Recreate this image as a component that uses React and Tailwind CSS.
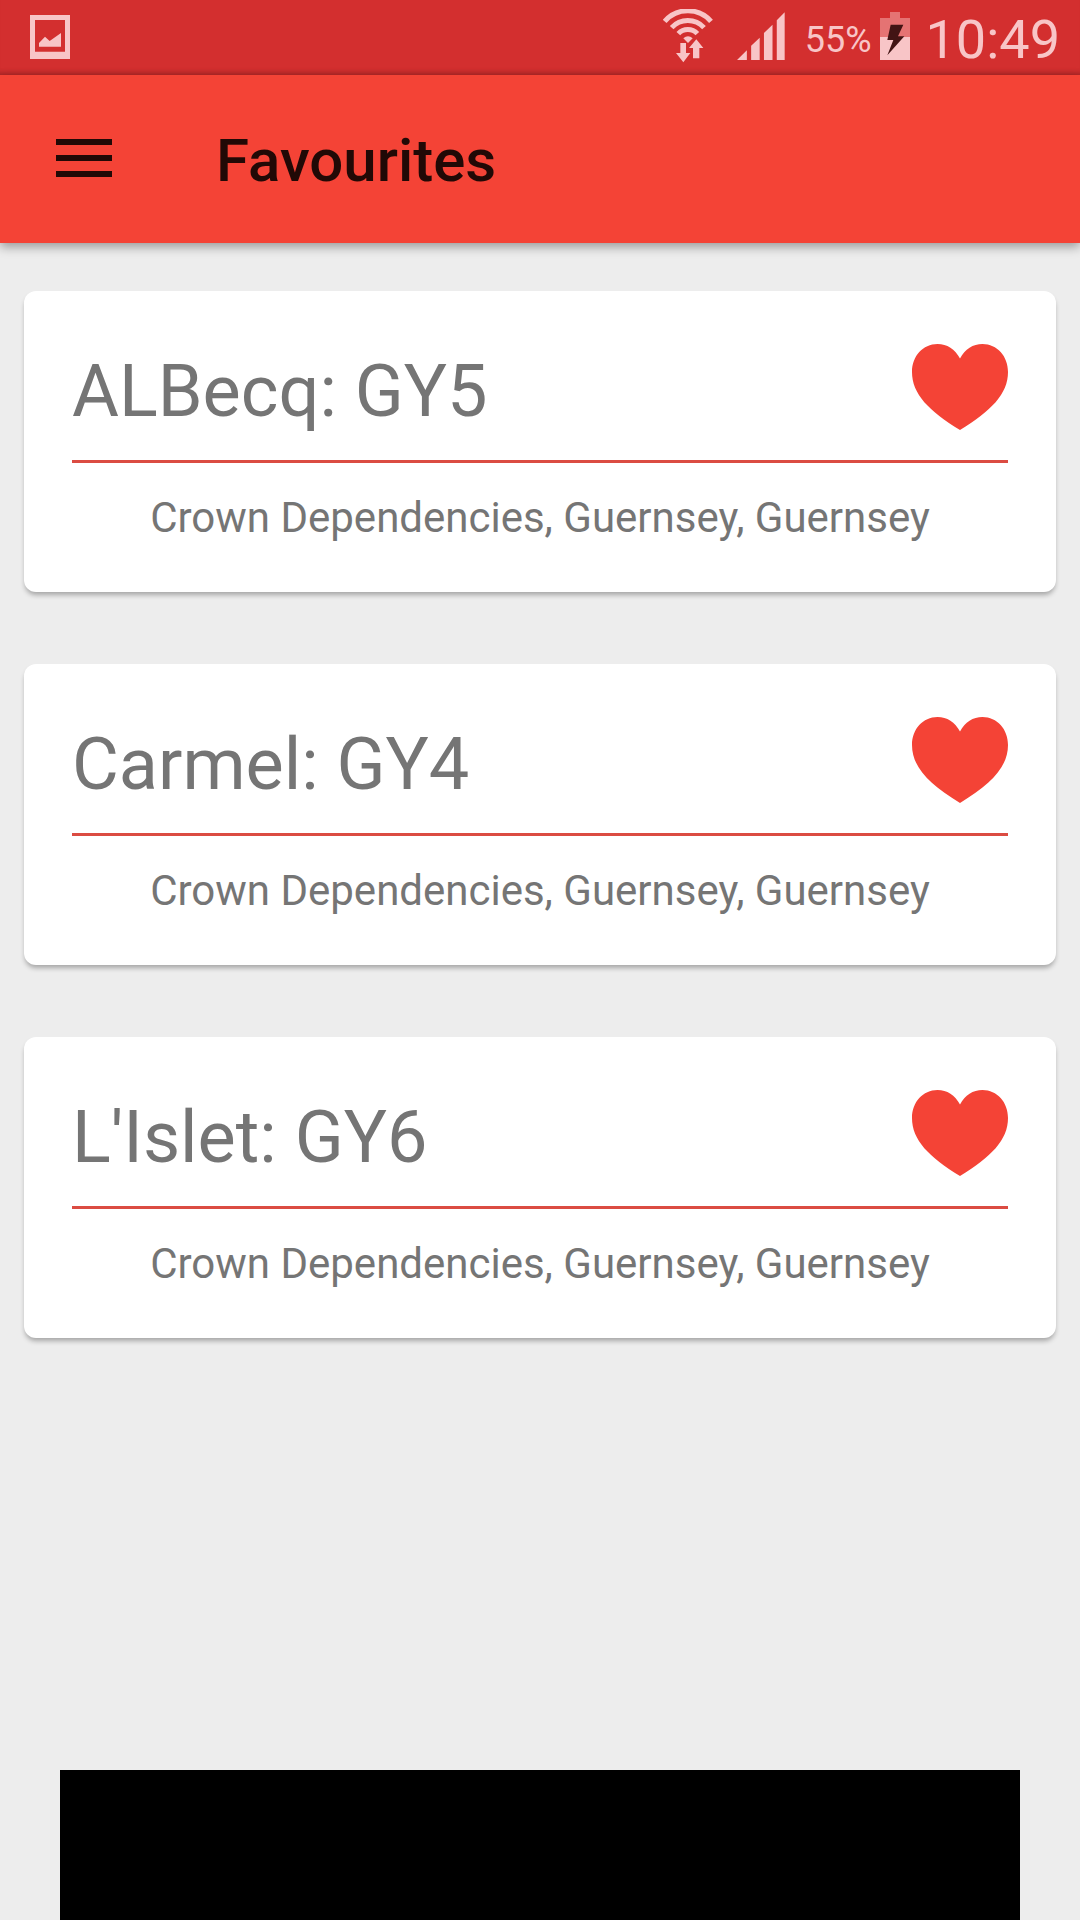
import React, { useState } from 'react';

const places = [
  { id: 1, name: 'ALBecq: GY5', region: 'Crown Dependencies, Guernsey, Guernsey' },
  { id: 2, name: 'Carmel: GY4', region: 'Crown Dependencies, Guernsey, Guernsey' },
  { id: 3, name: "L'Islet: GY6", region: 'Crown Dependencies, Guernsey, Guernsey' }
];

function PictureIcon() {
  return (
    <svg viewBox="0 0 120 132" className="w-10 h-11" fill="currentColor" aria-hidden="true">
      <path fillRule="evenodd" d="M0 0H120V132H0ZM15 15V110H105V15Z" />
      <path d="M27 95V84L45 65L59 78L93 54V95Z" />
    </svg>
  );
}

function WifiIcon() {
  return (
    <svg viewBox="0 0 150 162" className="w-[50px] h-[54px]" aria-hidden="true">
      <g fill="none" stroke="currentColor" strokeWidth="15">
        <path d="M5 37A92 92 0 0 1 144 37" />
        <path d="M26 56A66 66 0 0 1 123 56" />
        <path d="M46 74A39 39 0 0 1 103 74" />
      </g>
      <g fill="currentColor">
        <path d="M61 88Q75 75 89 88L75 102Z" />
        <path d="M52 102H69V132H82L61 160L39 132H52Z" />
        <path
          d="M100 91L121 117H109V148H90V117H78Z"
          stroke="#d32f2f"
          strokeWidth="4"
          paintOrder="stroke"
        />
      </g>
    </svg>
  );
}

function SignalIcon() {
  return (
    <svg viewBox="0 0 146 146" className="w-12 h-12" fill="currentColor" aria-hidden="true">
      <path d="M0 146L30 116V146ZM43 146V103L69 78V146ZM82 146V64L108 39V146ZM121 146V25L145 1V146Z" />
    </svg>
  );
}

function BatteryIcon() {
  return (
    <svg viewBox="0 0 90 144" className="w-[30px] h-12" aria-hidden="true">
      <path d="M30 0H60V18H90V75H0V18H30Z" fill="#e57373" />
      <path d="M0 75H90V144H0Z" fill="currentColor" />
      <path d="M32 38H70L54 73H73L22 130L40 84H22Z" fill="#421414" />
    </svg>
  );
}

function StatusBar() {
  return (
    <div className="h-[75px] pl-[30px] pr-5 pb-[3px] bg-[#d32f2f] text-[#f8c5c7] flex items-center shadow-[inset_0_-6px_5px_-4px_rgba(0,0,0,0.2)]">
      <div className="pt-[2px]">
        <PictureIcon />
      </div>
      <div className="ml-auto flex items-center">
        <WifiIcon />
        <div className="ml-6">
          <SignalIcon />
        </div>
        <span className="ml-5 pt-[7px] text-[36px] leading-none">55%</span>
        <div className="ml-2 mr-4">
          <BatteryIcon />
        </div>
        <span className="pt-[7px] text-[54px] leading-none">10:49</span>
      </div>
    </div>
  );
}

function Card({ place }) {
  const [liked, setLiked] = useState(true);

  return (
    <li className="bg-white rounded-xl px-12 pt-12 pb-[50px] shadow-[0_4px_5px_-1px_rgba(0,0,0,0.3)] text-[#757575]">
      <div className="h-24 flex items-center justify-between">
        <h2 className="pt-[10px] text-[72px] leading-none">{place.name}</h2>
        <button
          type="button"
          aria-label="Favourite"
          aria-pressed={liked}
          onClick={() => setLiked(!liked)}
          className={liked ? 'text-[#f44336]' : 'text-gray-300'}
        >
          <svg viewBox="0 0 96 86" className="w-24 h-[86px]" fill="currentColor">
            <path d="M48 14.5C43 5 35 0 25.5 0C11 0 0 12 0 28C0 50 17 67 48 86C79 67 96 50 96 28C96 12 85 0 70.5 0C61 0 53 5 48 14.5Z" />
          </svg>
        </button>
      </div>
      <hr className="mt-[25px] border-0 h-[3px] bg-[#db4c42]" />
      <p className="mt-[31px] text-center text-[42px] leading-[48px]">{place.region}</p>
    </li>
  );
}

function App() {
  return (
    <div className="min-h-screen flex flex-col bg-[#ededed] font-[Roboto,sans-serif]">
      <StatusBar />

      {/* Toolbar */}
      <header className="h-[168px] px-14 bg-[#f44336] text-[#210906] flex items-center shadow-[0_4px_10px_rgba(0,0,0,0.35)]">
        <button type="button" aria-label="Menu" className="w-14 pb-[2px] flex flex-col gap-[10px]">
          <span className="h-[6px] w-full bg-current" />
          <span className="h-[6px] w-full bg-current" />
          <span className="h-[6px] w-full bg-current" />
        </button>
        <h1 className="ml-[104px] pt-1 text-[60px] leading-none font-medium">Favourites</h1>
      </header>

      {/* Favourites list */}
      <main className="px-6 py-12">
        <ul className="space-y-[72px]">
          {places.map(place => (
            <Card key={place.id} place={place} />
          ))}
        </ul>
      </main>

      {/* Ad banner */}
      <footer className="mt-auto mx-[60px] h-[150px] bg-black" />
    </div>
  );
}

export default App;
